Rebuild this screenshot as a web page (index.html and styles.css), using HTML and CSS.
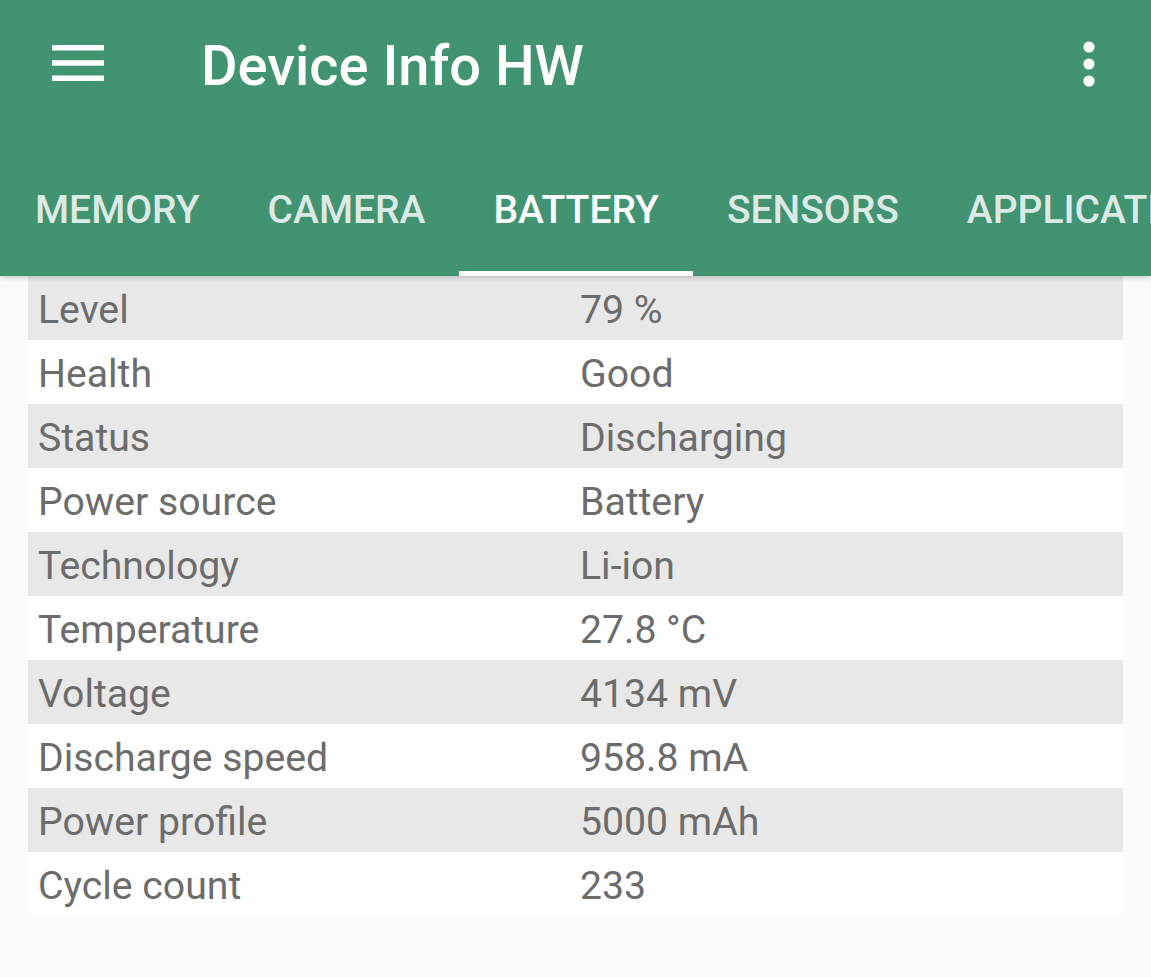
FILE: index.html
```html
<!DOCTYPE html>
<html>
<head>
<meta charset="utf-8">
<link rel="stylesheet" href="styles.css">
</head>
<body>
<header class="appbar">
  <div class="toolbar">
    <div class="menu-btn">
      <svg width="52" height="37" viewBox="0 0 52 37"><rect x="0" y="0" width="52" height="5.5" fill="#fff"/><rect x="0" y="15.2" width="52" height="5.5" fill="#fff"/><rect x="0" y="30.5" width="52" height="5.5" fill="#fff"/></svg>
    </div>
    <h1 class="title">Device Info HW</h1>
    <div class="more-btn">
      <svg width="12" height="46" viewBox="0 0 12 46"><circle cx="6" cy="6" r="5.6" fill="#fff"/><circle cx="6" cy="23" r="5.6" fill="#fff"/><circle cx="6" cy="40" r="5.6" fill="#fff"/></svg>
    </div>
  </div>
  <nav class="tabs">
    <div class="tab">MEMORY</div>
    <div class="tab">CAMERA</div>
    <div class="tab active">BATTERY</div>
    <div class="tab">SENSORS</div>
    <div class="tab">APPLICATIONS</div>
  </nav>
</header>
<main class="content">
  <div class="table">
    <div class="row"><span class="k">Level</span><span class="v">79 %</span></div>
    <div class="row"><span class="k">Health</span><span class="v">Good</span></div>
    <div class="row"><span class="k">Status</span><span class="v">Discharging</span></div>
    <div class="row"><span class="k">Power source</span><span class="v">Battery</span></div>
    <div class="row"><span class="k">Technology</span><span class="v">Li-ion</span></div>
    <div class="row"><span class="k">Temperature</span><span class="v">27.8 °C</span></div>
    <div class="row"><span class="k">Voltage</span><span class="v">4134 mV</span></div>
    <div class="row"><span class="k">Discharge speed</span><span class="v">958.8 mA</span></div>
    <div class="row"><span class="k">Power profile</span><span class="v">5000 mAh</span></div>
    <div class="row"><span class="k">Cycle count</span><span class="v">233</span></div>
  </div>
</main>
</body>
</html>
```
FILE: styles.css
```css
html, body {
  margin: 0;
  padding: 0;
  background: #fafafa;
  font-family: Roboto, "Noto Sans", sans-serif;
  overflow: hidden;
}
.appbar {
  background: #419371;
  height: 276px;
  box-shadow: 0 2px 5px rgba(0,0,0,0.18);
  position: relative;
  z-index: 2;
  overflow: hidden;
}
.toolbar {
  height: 134px;
  display: flex;
  align-items: flex-start;
}
.menu-btn {
  padding-left: 52px;
  padding-top: 45px;
  display: flex;
}
.title {
  margin: 0;
  margin-left: 97px;
  padding-top: 31px;
  color: #fff;
  font-size: 56px;
  font-weight: 500;
  line-height: 70px;
  flex: 1;
}
.more-btn {
  padding-top: 41px;
  padding-right: 56px;
  display: flex;
}
.tabs {
  display: flex;
  height: 142px;
  white-space: nowrap;
}
.tab {
  flex: none;
  padding: 57px 34px 0;
  height: 142px;
  box-sizing: border-box;
  font-size: 39px;
  font-weight: 500;
  line-height: 39px;
  color: rgba(255,255,255,0.84);
  position: relative;
}
.tab:first-child {
  padding-left: 35px;
}
.tab.active {
  color: #fff;
}
.tab.active::after {
  content: "";
  position: absolute;
  left: 0;
  right: 0;
  bottom: 0;
  height: 5px;
  background: #fff;
}
.content {
  padding: 0 28px;
}
.table {
  display: flex;
  flex-direction: column;
}
.row {
  display: grid;
  grid-template-columns: 542px 1fr;
  height: 64px;
  box-sizing: border-box;
  padding-top: 5px;
  align-items: start;
  background: #fff;
  color: #6c6c6c;
  font-size: 39.2px;
  line-height: 59px;
}
.row:nth-child(odd) {
  background: #e8e8e8;
}
.k, .v {
  padding-left: 10px;
}
```
